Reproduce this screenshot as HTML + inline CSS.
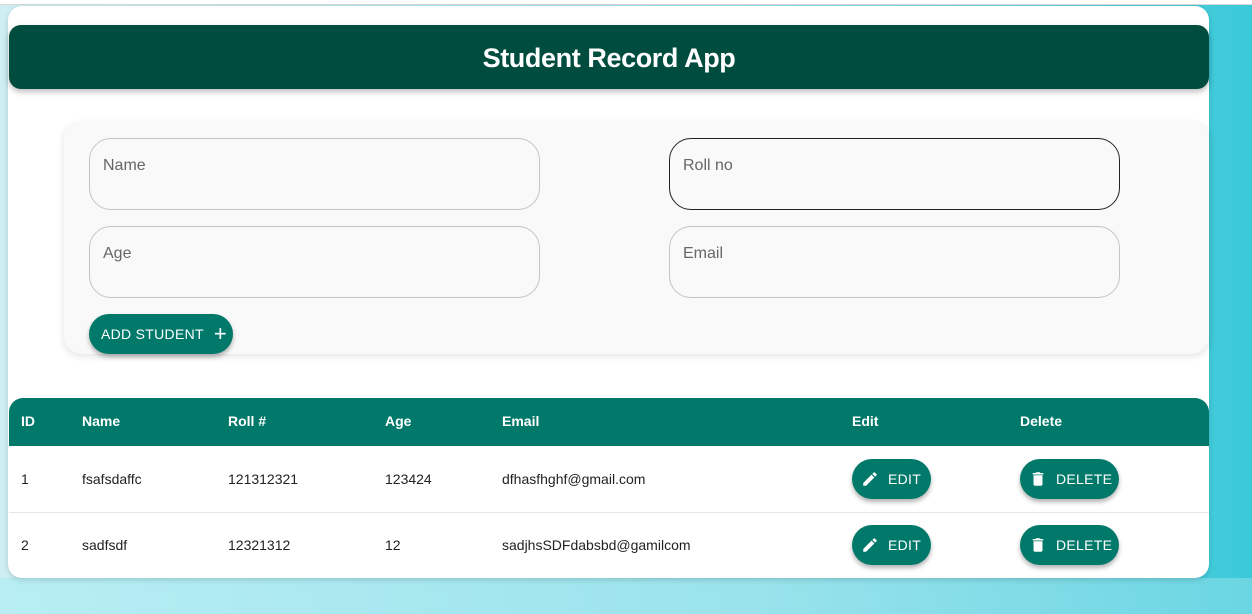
<!DOCTYPE html>
<html><head><meta charset="utf-8"><style>
*{box-sizing:border-box;margin:0;padding:0}
body{width:1252px;height:614px;overflow:hidden;font-family:"Liberation Sans",Arial,sans-serif;background:linear-gradient(90deg,#cdeff3 0%,#8fdfe8 60%,#3ac9d9 100%);position:relative}
.topbar{position:absolute;left:0;top:0;width:1252px;height:5px;background:#fff;border-bottom:1px solid #d8d8d8}
.bottom{position:absolute;left:0;top:578px;width:1252px;height:36px;background:linear-gradient(90deg,#b8eef3,#9ae3ec 60%,#6bd6e3)}
.card{position:absolute;left:8px;top:6px;width:1201px;height:572px;background:#fff;border-radius:14px;box-shadow:0 2px 6px rgba(0,0,0,.15)}
.header{position:absolute;left:9px;top:25px;width:1200px;height:64px;background:#004d40;border-radius:12px;box-shadow:0 3px 6px rgba(0,0,0,.25);color:#fff;font-weight:bold;font-size:27px;text-align:center;line-height:66px;letter-spacing:-0.4px}
.form{position:absolute;left:64px;top:122px;width:1145px;height:232px;background:#f9f9f9;border-radius:18px;box-shadow:0 2px 8px rgba(0,0,0,.12)}
.inp{position:absolute;width:451px;height:72px;border:1px solid #c4c4c4;border-radius:22px;background:#f9f9f9;color:#666;font-size:16px;padding:18px 0 0 13px}
.btn{position:absolute;background:#00796b;color:#fff;border-radius:20px;box-shadow:0 3px 5px rgba(0,0,0,.3);font-size:14px;display:flex;align-items:center;letter-spacing:.3px}
th{background:#00796b;color:#fff;text-align:left;height:48px;font-weight:bold;font-size:14px;padding-bottom:2px}
td{height:66px;border-bottom:1px solid #e6e6e6;font-size:14px;color:#222}
tr:last-child td{border-bottom:none}
table{border-collapse:collapse}
</style></head><body>
<div class="topbar"></div>
<div class="bottom"></div>
<div class="card"></div>
<div class="header">Student Record App</div>
<div class="form"></div>
<div class="inp" style="left:89px;top:138px">Name</div>
<div class="inp" style="left:669px;top:138px;border-color:#222">Roll no</div>
<div class="inp" style="left:89px;top:226px">Age</div>
<div class="inp" style="left:669px;top:226px">Email</div>
<div class="btn" style="left:89px;top:314px;width:144px;height:40px;padding-left:12px">ADD STUDENT<span style="font-size:22px;margin-left:10px;font-weight:300">+</span></div>
<div style="position:absolute;left:9px;top:398px;width:1200px;height:180px;overflow:hidden;border-radius:14px">
<table style="width:1200px">
<tr><th style="width:73px;padding-left:12px">ID</th><th style="width:146px">Name</th><th style="width:157px">Roll #</th><th style="width:117px">Age</th><th style="width:350px">Email</th><th style="width:168px">Edit</th><th>Delete</th></tr>
<tr><td style="padding-left:12px">1</td><td>fsafsdaffc</td><td>121312321</td><td>123424</td><td>dfhasfhghf@gmail.com</td><td></td><td></td></tr>
<tr><td style="padding-left:12px">2</td><td>sadfsdf</td><td>12321312</td><td>12</td><td>sadjhsSDFdabsbd@gamilcom</td><td></td><td></td></tr>
</table></div>
<svg width="0" height="0" style="position:absolute"><defs>
<symbol id="pen" viewBox="0 0 24 24"><path fill="#fff" d="M3 17.25V21h3.75L17.81 9.940l-3.75-3.75L3 17.25zM20.71 7.04a1 1 0 0 0 0-1.41l-2.34-2.34a1 1 0 0 0-1.41 0l-1.83 1.83 3.750 3.75 1.83-1.83z"/></symbol>
<symbol id="trash" viewBox="0 0 24 24"><path fill="#fff" d="M6 19c0 1.1.9 2 2 2h8c1.1 0 2-.9 2-2V7H6v12zM19 4h-3.5l-1-1h-5l-1 1H5v2h14V4z"/></symbol>
</defs></svg>
<div class="btn" style="left:852px;top:459px;width:79px;height:40px;padding-left:9px"><svg width="18" height="18"><use href="#pen"/></svg><span style="margin-left:9px">EDIT</span></div>
<div class="btn" style="left:1020px;top:459px;width:99px;height:40px;padding-left:9px"><svg width="18" height="18"><use href="#trash"/></svg><span style="margin-left:9px">DELETE</span></div>
<div class="btn" style="left:852px;top:525px;width:79px;height:40px;padding-left:9px"><svg width="18" height="18"><use href="#pen"/></svg><span style="margin-left:9px">EDIT</span></div>
<div class="btn" style="left:1020px;top:525px;width:99px;height:40px;padding-left:9px"><svg width="18" height="18"><use href="#trash"/></svg><span style="margin-left:9px">DELETE</span></div>
</body></html>
